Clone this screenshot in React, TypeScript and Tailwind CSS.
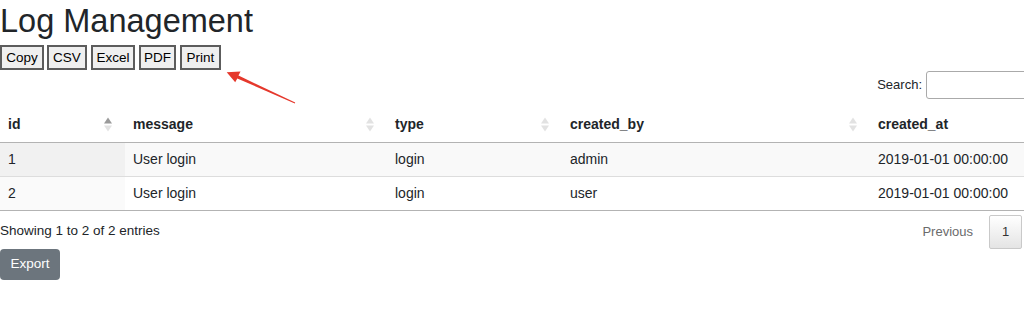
import React from "react";

const font = { fontFamily: '"Liberation Sans", Arial, sans-serif' };

function SortIcon({ active }: { active?: boolean }) {
  return (
    <svg width="8" height="15" viewBox="0 0 8 15" className="shrink-0">
      <polygon points="0,6.5 4,0.5 8,6.5" fill={active ? "#9a9a9a" : "#e2e2e2"} />
      <polygon points="0,8.5 8,8.5 4,14.5" fill="#e2e2e2" />
    </svg>
  );
}

const cols = [
  { key: "id", w: "w-[125px]" },
  { key: "message", w: "w-[262px]" },
  { key: "type", w: "w-[175px]" },
  { key: "created_by", w: "w-[308px]" },
  { key: "created_at", w: "w-[206px]" },
];

const rows = [
  ["1", "User login", "login", "admin", "2019-01-01 00:00:00"],
  ["2", "User login", "login", "user", "2019-01-01 00:00:00"],
];

const buttons = [
  { label: "Copy", cls: "w-[44px]" },
  { label: "CSV", cls: "w-[40px] ml-[3px]" },
  { label: "Excel", cls: "w-[44px] ml-[4px]" },
  { label: "PDF", cls: "w-[37px] ml-[4px]" },
  { label: "Print", cls: "w-[41px] ml-[4px]" },
];

export default function App() {
  return (
    <div className="relative w-[1024px] h-[315px] overflow-hidden bg-white text-[#212529]" style={font}>
      <div className="w-[1076px]">
        <h1 className="pt-[2px] text-[32.5px] leading-[38px] font-medium m-0">Log Management</h1>
        <div className="mt-[5px] flex">
          {buttons.map((b) => (
            <button
              key={b.label}
              className={`${b.cls} h-[25px] p-0 border-2 border-[#5c5c5c] bg-[#efefef] text-[13.5px] leading-none text-black`}
            >
              {b.label}
            </button>
          ))}
        </div>
        <div className="mt-[1px] flex justify-end items-center h-[28px]">
          <span className="text-[13px] mr-[4px]">Search:</span>
          <div className="w-[150px] h-[28px] border border-[#aaaaaa] rounded-[3px] bg-white" />
        </div>
        <table className="mt-[9px] w-full border-collapse text-[14px] table-fixed">
          <thead>
            <tr className="h-[34px] border-b border-[#b3b3b3]">
              {cols.map((c, i) => (
                <th key={c.key} className={`${c.w} p-0 font-bold text-left`}>
                  <div className="flex items-center justify-between pl-[8px] pr-[13px]">
                    <span>{c.key}</span>
                    <SortIcon active={i === 0} />
                  </div>
                </th>
              ))}
            </tr>
          </thead>
          <tbody>
            {rows.map((r, ri) => (
              <tr
                key={ri}
                className={`h-[34px] border-b ${ri === 0 ? "bg-[#f9f9f9] border-[#dddddd]" : "bg-white border-[#b3b3b3]"}`}
              >
                {r.map((v, ci) => (
                  <td
                    key={ci}
                    className={`p-0 pl-[8px] ${ci === 0 ? (ri === 0 ? "bg-[#f1f1f1]" : "bg-[#fafafa]") : ""}`}
                  >
                    {v}
                  </td>
                ))}
              </tr>
            ))}
          </tbody>
        </table>
      </div>
      <div className="w-[1024px] pr-[2px] mt-[4px] flex items-center justify-between h-[34px]">
        <span className="text-[13.5px]">Showing 1 to 2 of 2 entries</span>
        <div className="flex items-center text-[13px]">
          <span className="px-[14px] text-[#6b6b6b]">Previous</span>
          <span className="ml-[2px] w-[33px] h-[34px] flex items-center justify-center border border-[#c9c9c9] rounded-[2px] bg-gradient-to-b from-white to-[#e4e4e4] text-[#333]">
            1
          </span>
        </div>
      </div>
      <button className="block h-[31px] w-[60px] rounded-[4px] bg-[#6c757d] text-white text-[13.5px]">
        Export
      </button>
      <svg className="absolute left-0 top-0 pointer-events-none" width="1024" height="315">
        <polygon
          points="295.2,102.5 238.5,75.6 240.5,71.5 226.7,72.3 235.2,82.3 237.3,78.4 294.8,103.5"
          fill="#e5382c"
        />
      </svg>
    </div>
  );
}
